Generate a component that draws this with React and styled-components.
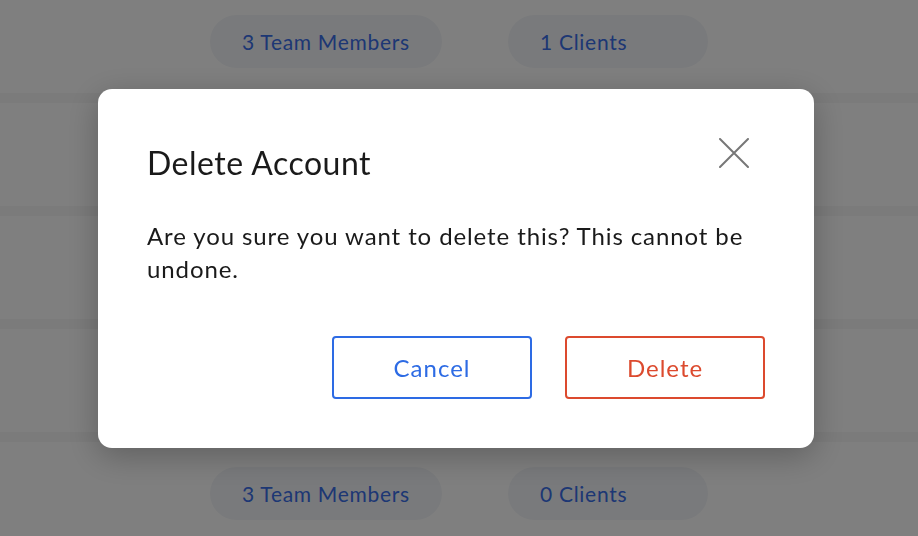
import React from 'react'
import styled, { createGlobalStyle } from 'styled-components'

const GlobalStyle = createGlobalStyle`
  html, body {
    margin: 0;
    padding: 0;
    height: 100%;
    overflow: hidden;
    background: #f6f6f6;
    font-family: Lato, "Liberation Sans", sans-serif;
  }
`

const rows = [
  { team: 3, clients: 1 },
  { hidden: true },
  { hidden: true },
  { hidden: true },
  { team: 3, clients: 0 },
]

function App() {
  return (
    <>
      <GlobalStyle />
      <List>
        {rows.map((r, i) => (
          <Row key={i}>
            <Lead />
            {!r.hidden && (
              <>
                <Cell><Pill>{r.team} Team Members</Pill></Cell>
                <Cell><Pill>{r.clients} Clients</Pill></Cell>
              </>
            )}
          </Row>
        ))}
      </List>
      <Overlay>
        <Modal>
          <Header>
            <Title>Delete Account</Title>
            <Close aria-label="Close">
              <svg width="30" height="30" viewBox="0 0 30 30">
                <path d="M1 1 L29 29 M29 1 L1 29" stroke="#777" strokeWidth="2" strokeLinecap="round" />
              </svg>
            </Close>
          </Header>
          <Body>Are you sure you want to delete this? This cannot be undone.</Body>
          <Actions>
            <Button color="#2d6be4">Cancel</Button>
            <Button color="#dc4a2e">Delete</Button>
          </Actions>
        </Modal>
      </Overlay>
    </>
  )
}

export default App

const List = styled.div`
  margin-top: -10px;
  display: flex;
  flex-direction: column;
  gap: 10px;
`

const Row = styled.div`
  height: 103px;
  background: #fff;
  display: grid;
  grid-template-columns: 210px 298px 298px;
  align-items: center;
`

const Lead = styled.div``

const Cell = styled.div`
  display: flex;
`

const Pill = styled.div`
  box-sizing: border-box;
  min-width: 200px;
  height: 53px;
  padding: 0 32px;
  border-radius: 27px;
  background: #f3f5f8;
  color: #3a6ee8;
  font-size: 21px;
  letter-spacing: 0.7px;
  display: flex;
  align-items: center;
`

const Overlay = styled.div`
  position: fixed;
  inset: 0;
  background: rgba(0, 0, 0, 0.5);
  display: flex;
  align-items: center;
  justify-content: center;
  padding-right: 6px;
`

const Modal = styled.div`
  width: 716px;
  box-sizing: border-box;
  padding: 48px 49px 49px;
  background: #fff;
  border-radius: 14px;
  box-shadow: 0 8px 32px rgba(0, 0, 0, 0.25);
`

const Header = styled.div`
  display: flex;
  justify-content: space-between;
  align-items: flex-start;
`

const Title = styled.h2`
  margin: 0;
  font-size: 32px;
  font-weight: 400;
  letter-spacing: 0.5px;
  line-height: 52px;
  color: #1a1a1a;
`

const Close = styled.button`
  width: 30px;
  height: 30px;
  padding: 0;
  margin-top: 1px;
  margin-right: 16px;
  border: none;
  background: none;
  cursor: pointer;
  svg{ display: block; }
`

const Body = styled.p`
  margin: 30px 0 0;
  font-size: 24px;
  line-height: 33px;
  letter-spacing: 0.9px;
  color: #1a1a1a;
`

const Actions = styled.div`
  margin-top: 51px;
  display: flex;
  justify-content: flex-end;
  gap: 33px;
`

const Button = styled.button`
  width: 200px;
  height: 63px;
  border: 2px solid ${p => p.color};
  border-radius: 4px;
  background: #fff;
  color: ${p => p.color};
  font-family: inherit;
  font-size: 24px;
  letter-spacing: 1px;
  cursor: pointer;
`
